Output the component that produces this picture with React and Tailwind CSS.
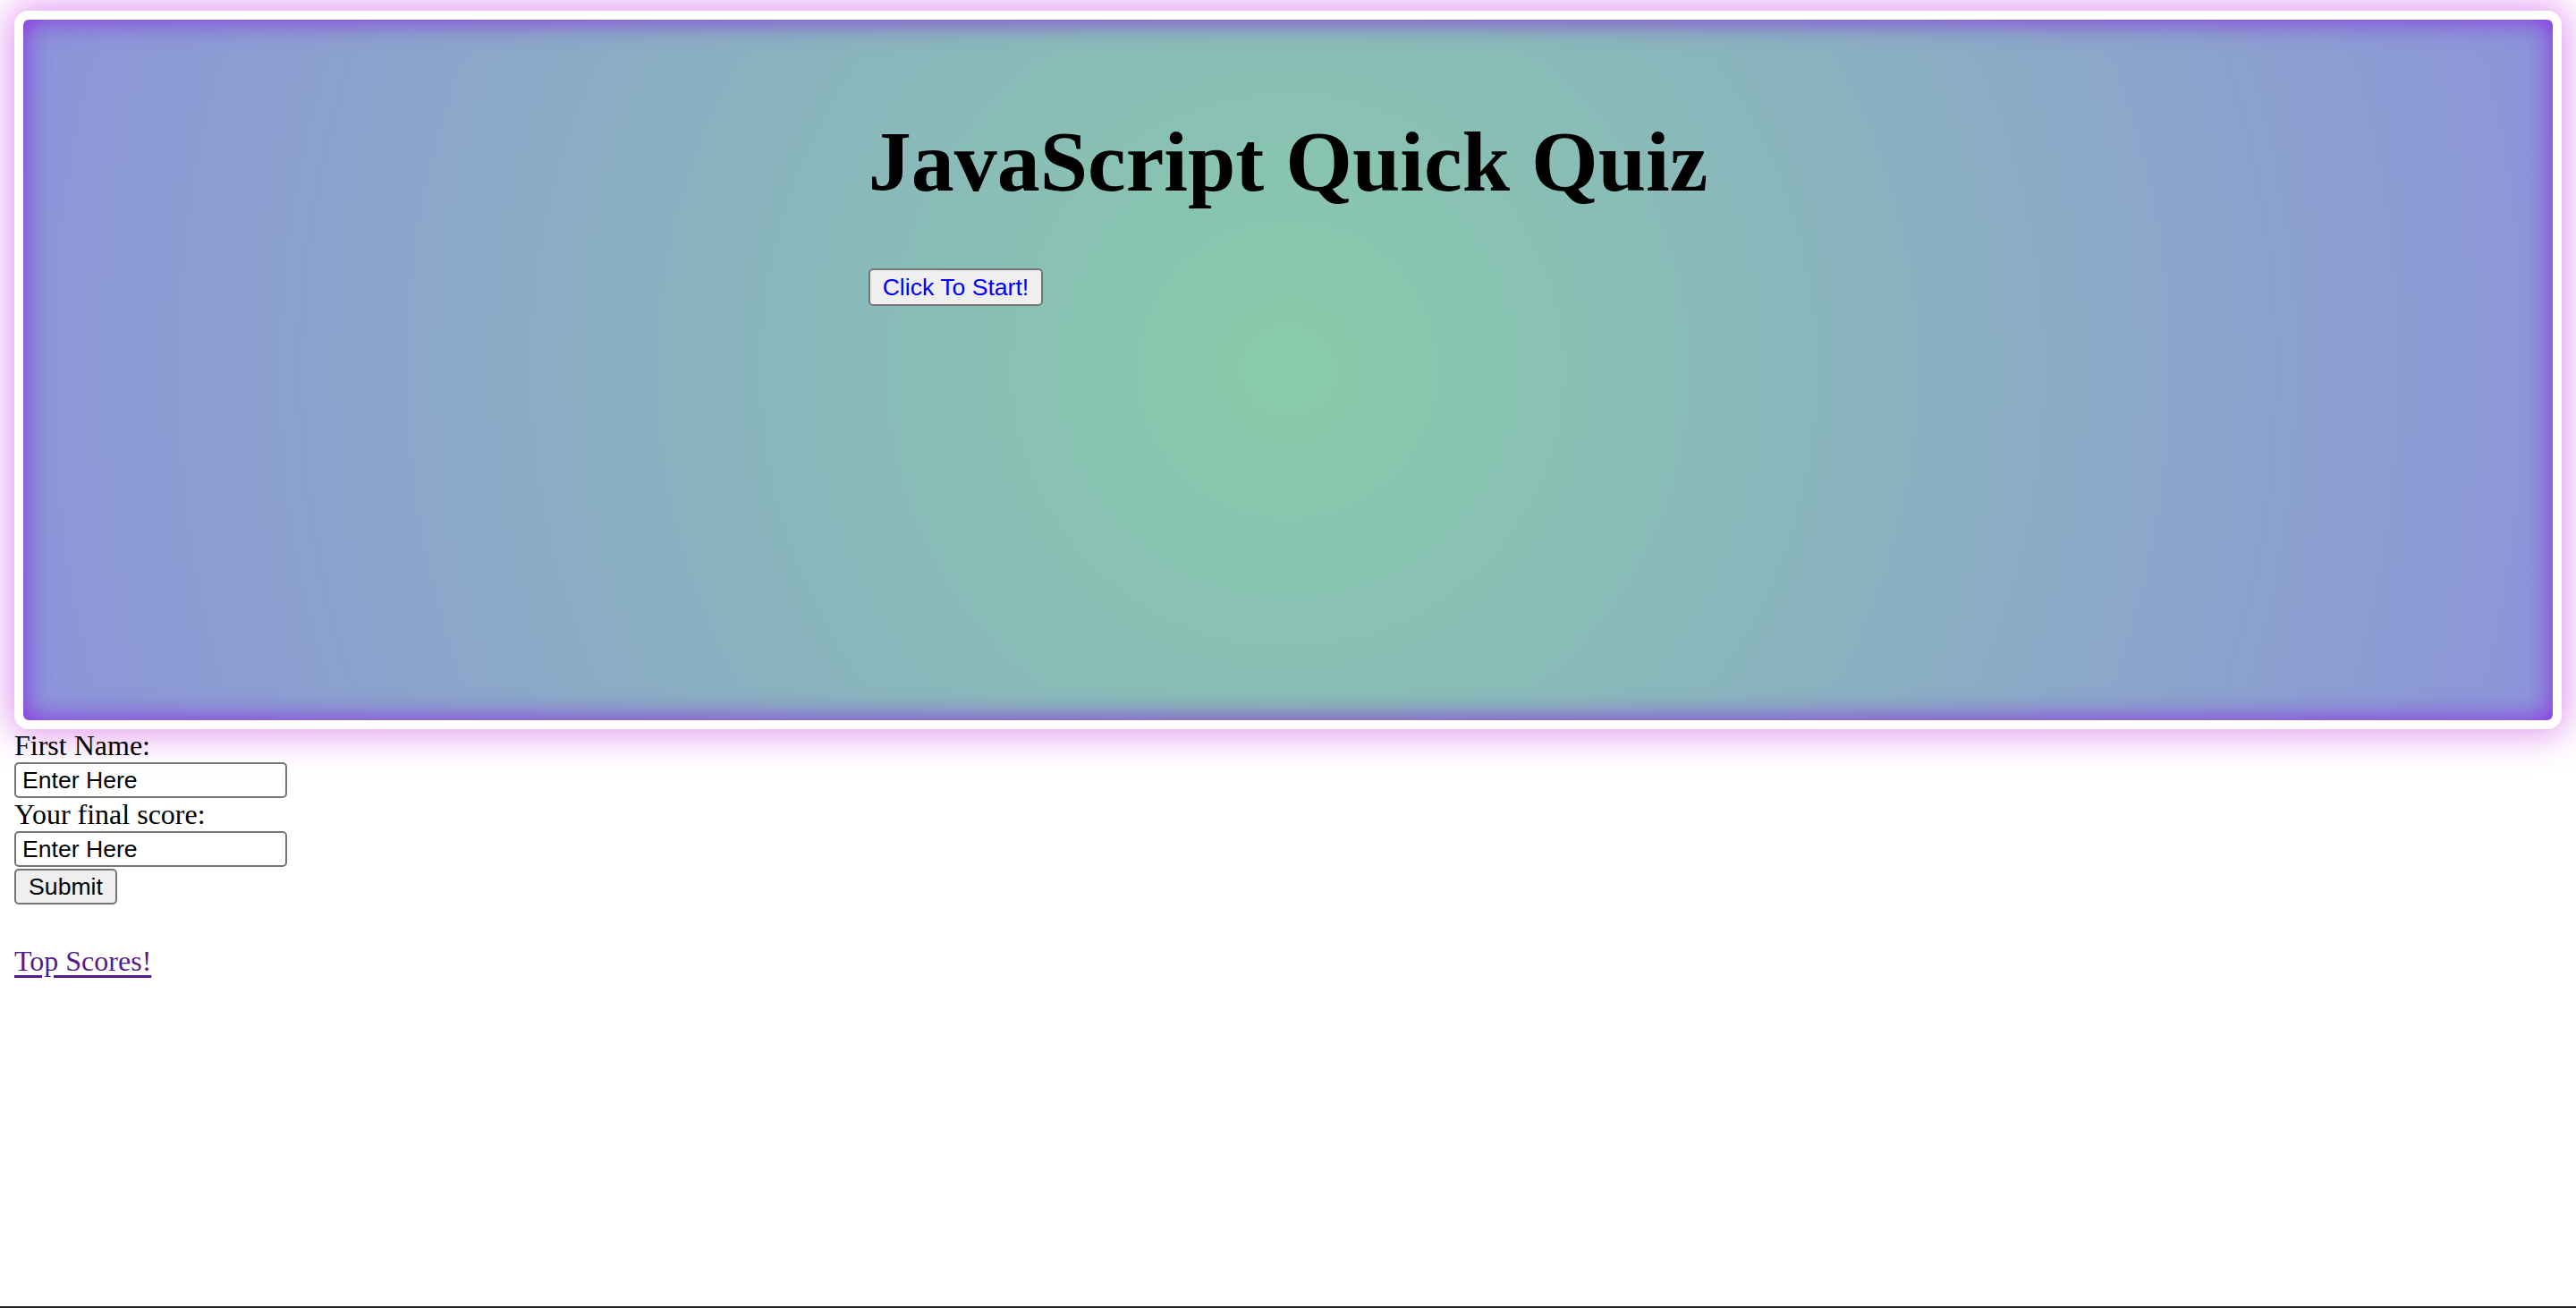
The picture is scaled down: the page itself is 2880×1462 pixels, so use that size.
import React from 'react';

const serif = "font-['Liberation_Serif','Times_New_Roman',serif]";
const sans = "font-['Liberation_Sans',Arial,sans-serif]";

const App = () => {
  return (
    <div className={`w-full h-[1462px] bg-white flex flex-col text-black ${serif}`}>
      {/* Quiz card */}
      <div className="px-4 pt-[12px]">
        <div className="h-[803px] rounded-[16px] border-[10px] border-white bg-[radial-gradient(circle,#88cca9,#8c94da)] shadow-[0_0_40px_6px_#e196f0,inset_0_0_30px_#8a2be2] pt-[104px]">
          <div className="mx-auto w-fit">
            <h1 className="text-[96px] leading-[110px] font-bold m-0">JavaScript Quick Quiz</h1>
            <button
              className={`mt-[64px] h-[42px] px-[14px] bg-[#efefef] border-2 border-[#767676] rounded-[5px] text-[#0000ff] text-[26.6px] leading-none ${sans}`}
            >
              Click To Start!
            </button>
          </div>
        </div>
      </div>

      {/* Score form */}
      <div className="px-4 text-[32px] leading-[37px]">
        <label className="block">First Name:</label>
        <input
          type="text"
          defaultValue="Enter Here"
          className={`block w-[305px] h-[40px] px-[7px] border-2 border-[#767676] rounded-[5px] text-[26.6px] outline-none ${sans}`}
        />
        <label className="block">Your final score:</label>
        <input
          type="text"
          defaultValue="Enter Here"
          className={`block w-[305px] h-[40px] px-[7px] border-2 border-[#767676] rounded-[5px] text-[26.6px] outline-none ${sans}`}
        />
        <button
          className={`block mt-[2px] w-[115px] h-[40px] bg-[#efefef] border-2 border-[#767676] rounded-[5px] text-[26.6px] leading-none ${sans}`}
        >
          Submit
        </button>
        <a href="#" className="block w-fit mt-[45px] text-[#551a8b] underline underline-offset-[5px]">
          Top Scores!
        </a>
      </div>

      <div className="mt-auto h-[2px] bg-[#222]" />
    </div>
  );
};

export default App;
